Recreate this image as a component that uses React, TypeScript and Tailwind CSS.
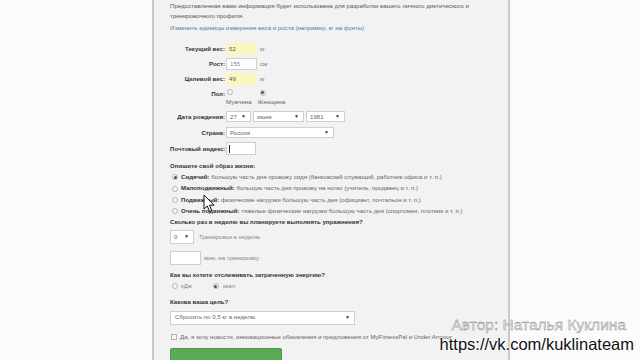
import React from 'react'

const font = { fontFamily: '"Liberation Sans", Arial, sans-serif' }

function Select({ value, className }: { value: string; className: string }) {
  return (
    <div className={`flex items-center justify-between h-[11px] bg-white border border-[#cfcfcf] pl-[3px] pr-[4px] text-[#666] ${className}`}>
      <span>{value}</span>
      <span className="text-[5px] text-[#333]">▼</span>
    </div>
  )
}

function Radio({ checked }: { checked?: boolean }) {
  return (
    <span className="inline-flex items-center justify-center w-[6px] h-[6px] rounded-full border border-[#b5b5b5] bg-[#f8f8f8] shrink-0">
      {checked && <span className="w-[3px] h-[3px] rounded-full bg-[#555]" />}
    </span>
  )
}

function Row({ label, children, className = '' }: { label: string; children: React.ReactNode; className?: string }) {
  return (
    <div className={`flex items-center ${className}`}>
      <div className="w-[56px] text-right font-bold text-[#333] pr-[1px] whitespace-nowrap">{label}</div>
      {children}
    </div>
  )
}

const lifestyles = [
  { title: 'Сидячий:', text: 'большую часть дня провожу сидя (банковский служащий, работник офиса и т. п.)', checked: true },
  { title: 'Малоподвижный:', text: 'большую часть дня провожу на ногах (учитель, продавец и т. п.)' },
  { title: 'Подвижный:', text: 'физические нагрузки большую часть дня (официант, почтальон и т. п.)' },
  { title: 'Очень подвижный:', text: 'тяжелые физические нагрузки большую часть дня (спортсмен, плотник и т. п.)' },
]

export default function App() {
  return (
    <div className="relative w-[640px] h-[360px] overflow-hidden bg-[#fbfbfb] flex text-[6.1px] leading-none" style={font}>
      <div className="w-[152px] shrink-0" />
      <div className="w-[358px] shrink-0 bg-[#f2f2f2] border-l-2 border-r-2 border-[#c9c9c9] pl-[16px] pt-[1px] text-[#555]">
        <p className="leading-[10px] w-[310px]">
          Предоставленная вами информация будет использована для разработки вашего личного диетического и тренировочного профиля.
        </p>
        <p className="mt-[4px] text-[#4b7db3]">Изменить единицы измерения веса и роста (например, кг на фунты)</p>

        <div className="mt-[12px] flex flex-col">
          <Row label="Текущий вес:">
            <div className="w-[31px] h-[12px] bg-[#fbf6bf] pl-[3px] flex items-center text-[#555]">52</div>
            <span className="ml-[3px] text-[#777]">кг</span>
          </Row>
          <Row label="Рост:" className="mt-[3px]">
            <div className="w-[31px] h-[12px] bg-white border border-[#cfcfcf] pl-[3px] flex items-center text-[#888]">155</div>
            <span className="ml-[3px] text-[#777]">см</span>
          </Row>
          <Row label="Целевой вес:" className="mt-[3px]">
            <div className="w-[31px] h-[12px] bg-[#fbf6bf] pl-[3px] flex items-center text-[#555]">49</div>
            <span className="ml-[3px] text-[#777]">кг</span>
          </Row>
          <div className="flex mt-[4px]">
            <div className="w-[56px] text-right font-bold text-[#333] pr-[1px] pt-[2px]">Пол:</div>
            <div className="flex flex-col items-start">
              <span className="ml-[1px]"><Radio /></span>
              <span className="mt-[3px] text-[#666]">Мужчина</span>
            </div>
            <div className="flex flex-col items-start ml-[6px]">
              <span className="ml-[2px]"><Radio checked /></span>
              <span className="mt-[3px] text-[#666]">Женщина</span>
            </div>
          </div>
          <Row label="Дата рождения:" className="mt-[6px]">
            <Select value="27" className="w-[25px]" />
            <Select value="июня" className="w-[51px] ml-[2px]" />
            <Select value="1981" className="w-[39px] ml-[2px]" />
          </Row>
          <Row label="Страна:" className="mt-[5px]">
            <Select value="Россия" className="w-[108px]" />
          </Row>
          <Row label="Почтовый индекс:" className="mt-[4px]">
            <div className="w-[30px] h-[13px] bg-white border border-[#cfcfcf] flex items-center pl-[2px]">
              <span className="w-px h-[8px] bg-[#222]" />
            </div>
          </Row>
        </div>

        <p className="mt-[8px] font-bold text-[#333]">Опишите свой образ жизни:</p>
        <div className="mt-[5px] flex flex-col gap-[5px] pl-[2px]">
          {lifestyles.map((l) => (
            <div key={l.title} className="flex items-center gap-[3px]">
              <Radio checked={l.checked} />
              <span className="text-[#666]">
                <b className="text-[#333]">{l.title}</b> {l.text}
              </span>
            </div>
          ))}
        </div>

        <p className="mt-[5px] font-bold text-[#333]">Сколько раз в неделю вы планируете выполнять упражнения?</p>
        <div className="mt-[5px] flex items-center">
          <Select value="0" className="w-[24px] h-[14px]" />
          <span className="ml-[5px] text-[#888]">Тренировок в неделю</span>
        </div>
        <div className="mt-[7px] flex items-center">
          <div className="w-[31px] h-[14px] bg-white border border-[#cfcfcf]" />
          <span className="ml-[3px] text-[#888]">мин. на тренировку</span>
        </div>

        <p className="mt-[7px] font-bold text-[#333]">Как вы хотите отслеживать затраченную энергию?</p>
        <div className="mt-[5px] flex items-center pl-[2px] text-[#888]">
          <Radio />
          <span className="ml-[3px]">кДж</span>
          <span className="ml-[21px]"><Radio checked /></span>
          <span className="ml-[4px]">ккал</span>
        </div>

        <p className="mt-[10px] font-bold text-[#333]">Какова ваша цель?</p>
        <div className="mt-[5px]">
          <Select value="Сбросить по 0,5 кг в неделю" className="w-[185px] h-[14px] pl-[4px]" />
        </div>

        <div className="mt-[9px] flex items-center pl-[1px] text-[#666]">
          <span className="w-[6px] h-[6px] border border-[#b5b5b5] bg-[#f6f6f6] shrink-0" />
          <span className="ml-[3px]">Да, я хочу новости, инновационные обновления и предложения от MyFitnessPal и Under Armour</span>
        </div>

        <div className="mt-[8px] w-[112px] h-[16px] rounded-[2px] bg-[#5bab55] border border-[#4c9a47]" />
      </div>

      <svg className="absolute left-[203px] top-[194px]" width="12" height="19" viewBox="0 0 12 19">
        <path d="M1 1 L1 15 L4.3 12 L6.6 17.5 L8.8 16.6 L6.5 11.2 L11 11.2 Z" fill="#fff" stroke="#111" strokeWidth="1" strokeLinejoin="round" />
      </svg>

      <div className="absolute left-[438px] top-[317px] flex flex-col items-end w-[196px]">
        <span className="text-[15.5px] leading-none text-[#e6e6e6] [-webkit-text-stroke:0.35px_#777] mr-[8px]">Автор: Наталья Куклина</span>
        <span className="mt-[3px] text-[16.5px] leading-none text-[#111] [text-shadow:0_0_2px_#fff,0_0_2px_#fff,0_0_3px_#fff]">https://vk.com/kuklinateam</span>
      </div>
    </div>
  )
}
